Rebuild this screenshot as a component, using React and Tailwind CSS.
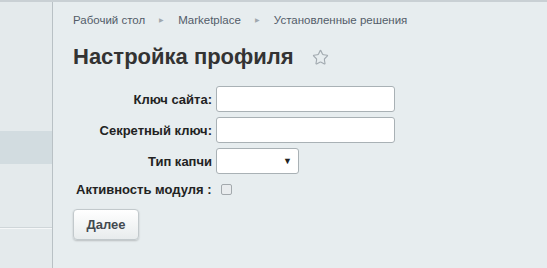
import { Star } from 'lucide-react'

function App() {
  return (
    <div className="w-[547px] h-[268px] flex bg-[#e7edef] overflow-hidden font-['Liberation_Sans',Arial,sans-serif] border-t-2 border-[#c9d0d4]">

      {/* Сайдбар */}
      <div className="w-[53px] shrink-0 border-r border-[#b9c1c5] bg-[#e4eaec] flex flex-col">
        <div className="h-[129px]" />
        <div className="h-[33px] bg-[#d2dce0]" />
        <div className="h-[63px]" />
        <div className="h-[2px] bg-[#f5f7f8] border-t border-[#cfd6d9]" />
      </div>

      {/* Контент */}
      <div className="flex-1 pl-[20px] pt-[10px]">
        <div className="flex items-center text-[11.5px] text-[#535c69] gap-[14px]">
          <span>Рабочий стол</span>
          <span className="text-[#a0a8ae] text-[6px]">▶</span>
          <span>Marketplace</span>
          <span className="text-[#a0a8ae] text-[6px]">▶</span>
          <span>Установленные решения</span>
        </div>

        <div className="flex items-center mt-[13px] h-[30px]">
          <h1 className="text-[22px] font-bold text-[#333] leading-none">Настройка профиля</h1>
          <Star className="ml-[18px] w-[17px] h-[17px] text-[#a2aab0]" strokeWidth={1.6} />
        </div>

        <div className="mt-[14px] flex flex-col gap-[5px] text-[13px] font-bold text-[#222]">
          <div className="flex items-center">
            <span className="w-[143px] text-right pr-[4px]">Ключ сайта:</span>
            <input className="w-[179px] h-[26px] bg-white border border-[#a9b1b5] rounded-[3px]" />
          </div>
          <div className="flex items-center">
            <span className="w-[143px] text-right pr-[4px]">Секретный ключ:</span>
            <input className="w-[179px] h-[26px] bg-white border border-[#a9b1b5] rounded-[3px]" />
          </div>
          <div className="flex items-center">
            <span className="w-[143px] text-right pr-[4px]">Тип капчи</span>
            <div className="w-[83px] h-[26px] bg-white border border-[#a9b1b5] rounded-[3px] flex items-center justify-end pr-[6px] text-[9px]">▼</div>
          </div>
          <div className="flex items-center h-[20px]">
            <span className="pl-[3px] pr-[9px]">Активность модуля :</span>
            <span className="w-[11px] h-[11px] border border-[#a3a9ad] rounded-[2px] bg-[#e9ecee]" />
          </div>
        </div>

        <button className="mt-[10px] w-[66px] h-[31px] rounded-[4px] border border-[#c2c9cc] bg-gradient-to-b from-white to-[#e8eced] shadow-[0_1px_2px_rgba(0,0,0,0.2)] text-[13px] font-bold text-[#434a50]">
          Далее
        </button>
      </div>
    </div>
  )
}

export default App
